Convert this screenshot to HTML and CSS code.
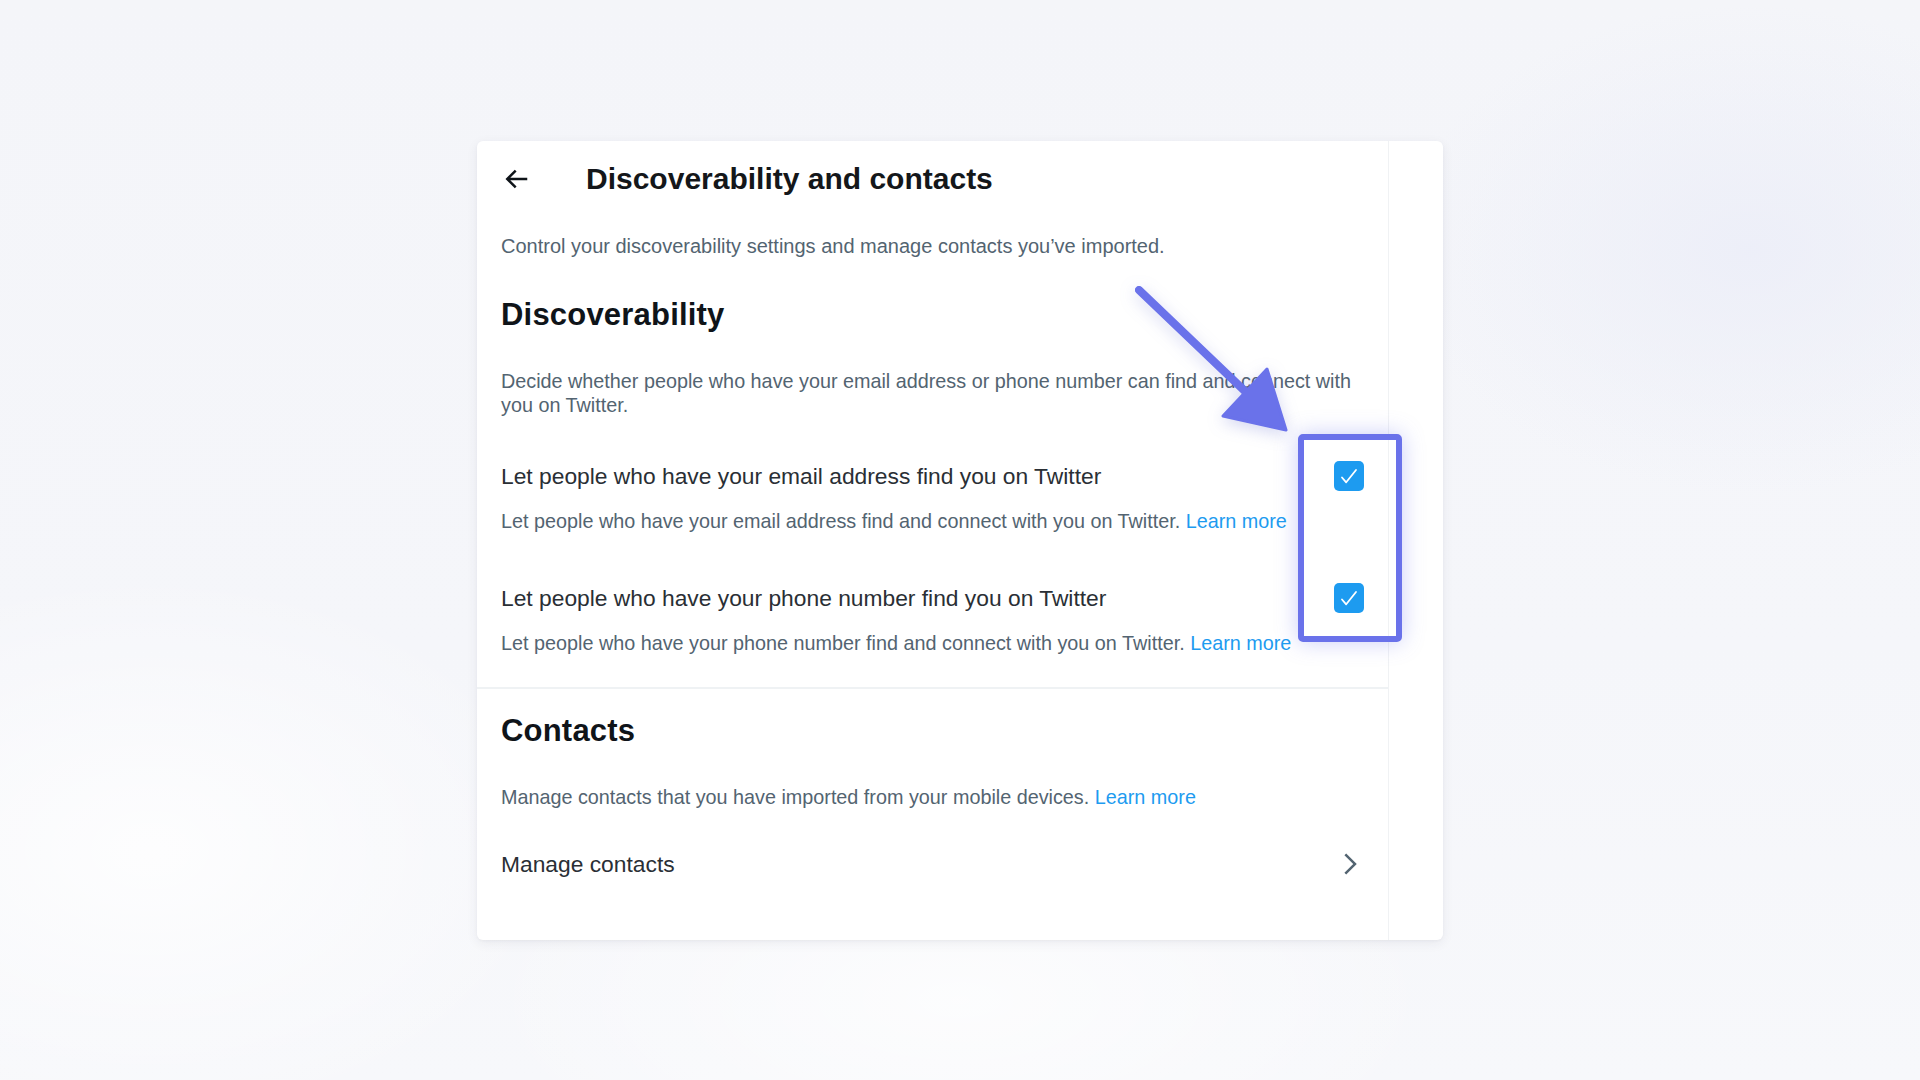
FILE: index.html
```html
<!DOCTYPE html>
<html lang="en">
<head>
<meta charset="utf-8">
<title>Discoverability and contacts</title>
<link rel="stylesheet" href="styles.css">
</head>
<body>
<main class="stage">
  <section class="card">
    <div class="main-col">
      <header class="topbar">
        <svg class="back" viewBox="0 0 24 24" aria-hidden="true"><path d="M7.414 13l5.043 5.04-1.414 1.42L3.586 12l7.457-7.46 1.414 1.42L7.414 11H21v2H7.414z"/></svg>
        <h1 class="title">Discoverability and contacts</h1>
      </header>
      <p class="intro">Control your discoverability settings and manage contacts you’ve imported.</p>

      <div class="section">
        <h2 class="section-title">Discoverability</h2>
        <p class="section-desc">Decide whether people who have your email address or phone number can find and connect with you on Twitter.</p>

        <div class="option">
          <div class="option-text">
            <div class="option-label">Let people who have your email address find you on Twitter</div>
            <p class="option-help">Let people who have your email address find and connect with you on Twitter. <a class="link" href="#">Learn more</a></p>
          </div>
          <span class="checkbox"><svg viewBox="0 0 30 30"><path d="M8 16.5l4.2 4.8L22 9"/></svg></span>
        </div>

        <div class="option option-second">
          <div class="option-text">
            <div class="option-label">Let people who have your phone number find you on Twitter</div>
            <p class="option-help">Let people who have your phone number find and connect with you on Twitter. <a class="link" href="#">Learn more</a></p>
          </div>
          <span class="checkbox"><svg viewBox="0 0 30 30"><path d="M8 16.5l4.2 4.8L22 9"/></svg></span>
        </div>
      </div>

      <div class="divider"></div>

      <div class="section contacts">
        <h2 class="section-title">Contacts</h2>
        <p class="section-desc contacts-desc">Manage contacts that you have imported from your mobile devices. <a class="link" href="#">Learn more</a></p>
        <div class="nav-row">
          <span class="nav-label">Manage contacts</span>
          <svg class="chevron" viewBox="0 0 24 24" aria-hidden="true"><path d="M14.586 12L7.543 4.96l1.414-1.42L17.414 12l-8.457 8.46-1.414-1.42L14.586 12z"/></svg>
        </div>
      </div>
    </div>
    <div class="side-col"></div>
  </section>

  <div class="highlight"></div>
  <svg class="pointer" viewBox="0 0 1920 1080" aria-hidden="true">
    <line x1="1139" y1="290" x2="1250" y2="396" />
    <path d="M1286 430 L1223 416 L1267 369 Z" />
  </svg>
</main>
</body>
</html>
```

FILE: styles.css
```css
* {
  box-sizing: border-box;
}

html, body {
  margin: 0;
  padding: 0;
}

body {
  font-family: "Liberation Sans", Arial, sans-serif;
  color: #0f1419;
  background: #f4f5f9;
}

.stage {
  position: relative;
  width: 100%;
  height: 100vh;
  display: flex;
  align-items: center;
  justify-content: center;
  overflow: hidden;
  background:
    radial-gradient(ellipse 600px 400px at 150px 850px, rgba(255,255,255,0.8), rgba(255,255,255,0) 70%),
    radial-gradient(ellipse 500px 350px at 1750px 250px, rgba(236,238,248,0.9), rgba(236,238,248,0) 70%),
    radial-gradient(ellipse 700px 300px at 960px 1000px, rgba(255,255,255,0.7), rgba(255,255,255,0) 70%),
    linear-gradient(180deg, #f4f5f9 0%, #f5f6fa 60%, #f7f8fb 100%);
}

.card {
  display: flex;
  width: 966px;
  background: #ffffff;
  border-radius: 6px;
  box-shadow: 0 3px 12px rgba(40, 45, 70, 0.07), 0 1px 3px rgba(40, 45, 70, 0.04);
}

.main-col {
  width: 912px;
  border-right: 1px solid #f0f2f4;
  padding-bottom: 61px;
}

.side-col {
  flex: 1;
}

.topbar {
  height: 76px;
  display: flex;
  align-items: center;
  padding: 0 24px;
}

.back {
  width: 30px;
  height: 30px;
  fill: #0f1419;
  flex: none;
}

.title {
  margin: 0 0 0 55px;
  font-size: 30px;
  font-weight: 700;
  line-height: 36px;
  letter-spacing: 0;
  color: #14171a;
}

.intro {
  margin: 17px 0 0;
  padding: 0 24px;
  font-size: 20px;
  line-height: 24px;
  color: #536471;
}

.section {
  padding: 0 24px;
}

.section-title {
  margin: 39px 0 0;
  font-size: 31px;
  line-height: 36px;
  font-weight: 700;
  letter-spacing: 0.2px;
  color: #0f1419;
}

.section-desc {
  margin: 36px 0 0;
  font-size: 19.8px;
  line-height: 24px;
  color: #536471;
}

.option {
  display: flex;
  align-items: flex-start;
  margin-top: 44px;
}

.option-second {
  margin-top: 50px;
}

.option-text {
  flex: 1;
  min-width: 0;
}

.option-label {
  font-size: 22.8px;
  line-height: 30px;
  color: #2a2f35;
}

.option-help {
  margin: 18px 0 0;
  font-size: 19.8px;
  line-height: 24px;
  color: #536471;
  white-space: nowrap;
}

.link {
  color: #1d9bf0;
  text-decoration: none;
}

.checkbox {
  flex: none;
  width: 30px;
  height: 30px;
  margin-top: 0;
  margin-left: 16px;
  border-radius: 5px;
  background: #1d9bf0;
  display: flex;
}

.checkbox svg {
  width: 30px;
  height: 30px;
  fill: none;
  stroke: #ffffff;
  stroke-width: 1.8;
  stroke-linecap: round;
  stroke-linejoin: round;
}

.divider {
  margin-top: 32px;
  height: 2px;
  background: #eff2f4;
}

.contacts .section-title {
  margin-top: 24px;
}

.contacts-desc {
  margin-top: 36px;
}

.nav-row {
  margin-top: 40px;
  height: 30px;
  display: flex;
  align-items: center;
  justify-content: space-between;
}

.nav-label {
  font-size: 22.8px;
  line-height: 30px;
  color: #2a2f35;
}

.chevron {
  width: 30px;
  height: 30px;
  fill: #536471;
  margin-right: -1px;
}

.highlight {
  position: absolute;
  left: 1298px;
  top: 434px;
  width: 104px;
  height: 208px;
  border: 6px solid #6a72ea;
  border-radius: 5px;
  box-shadow: 0 0 22px rgba(106, 114, 234, 0.35);
  pointer-events: none;
}

.pointer {
  position: absolute;
  left: 0;
  top: 0;
  width: 1920px;
  height: 1080px;
  pointer-events: none;
  filter: drop-shadow(0 4px 8px rgba(80, 90, 200, 0.25));
}

.pointer line {
  stroke: #6a72ea;
  stroke-width: 8;
  stroke-linecap: round;
}

.pointer path {
  fill: #6a72ea;
  stroke: #6a72ea;
  stroke-width: 3;
  stroke-linejoin: round;
}
```
